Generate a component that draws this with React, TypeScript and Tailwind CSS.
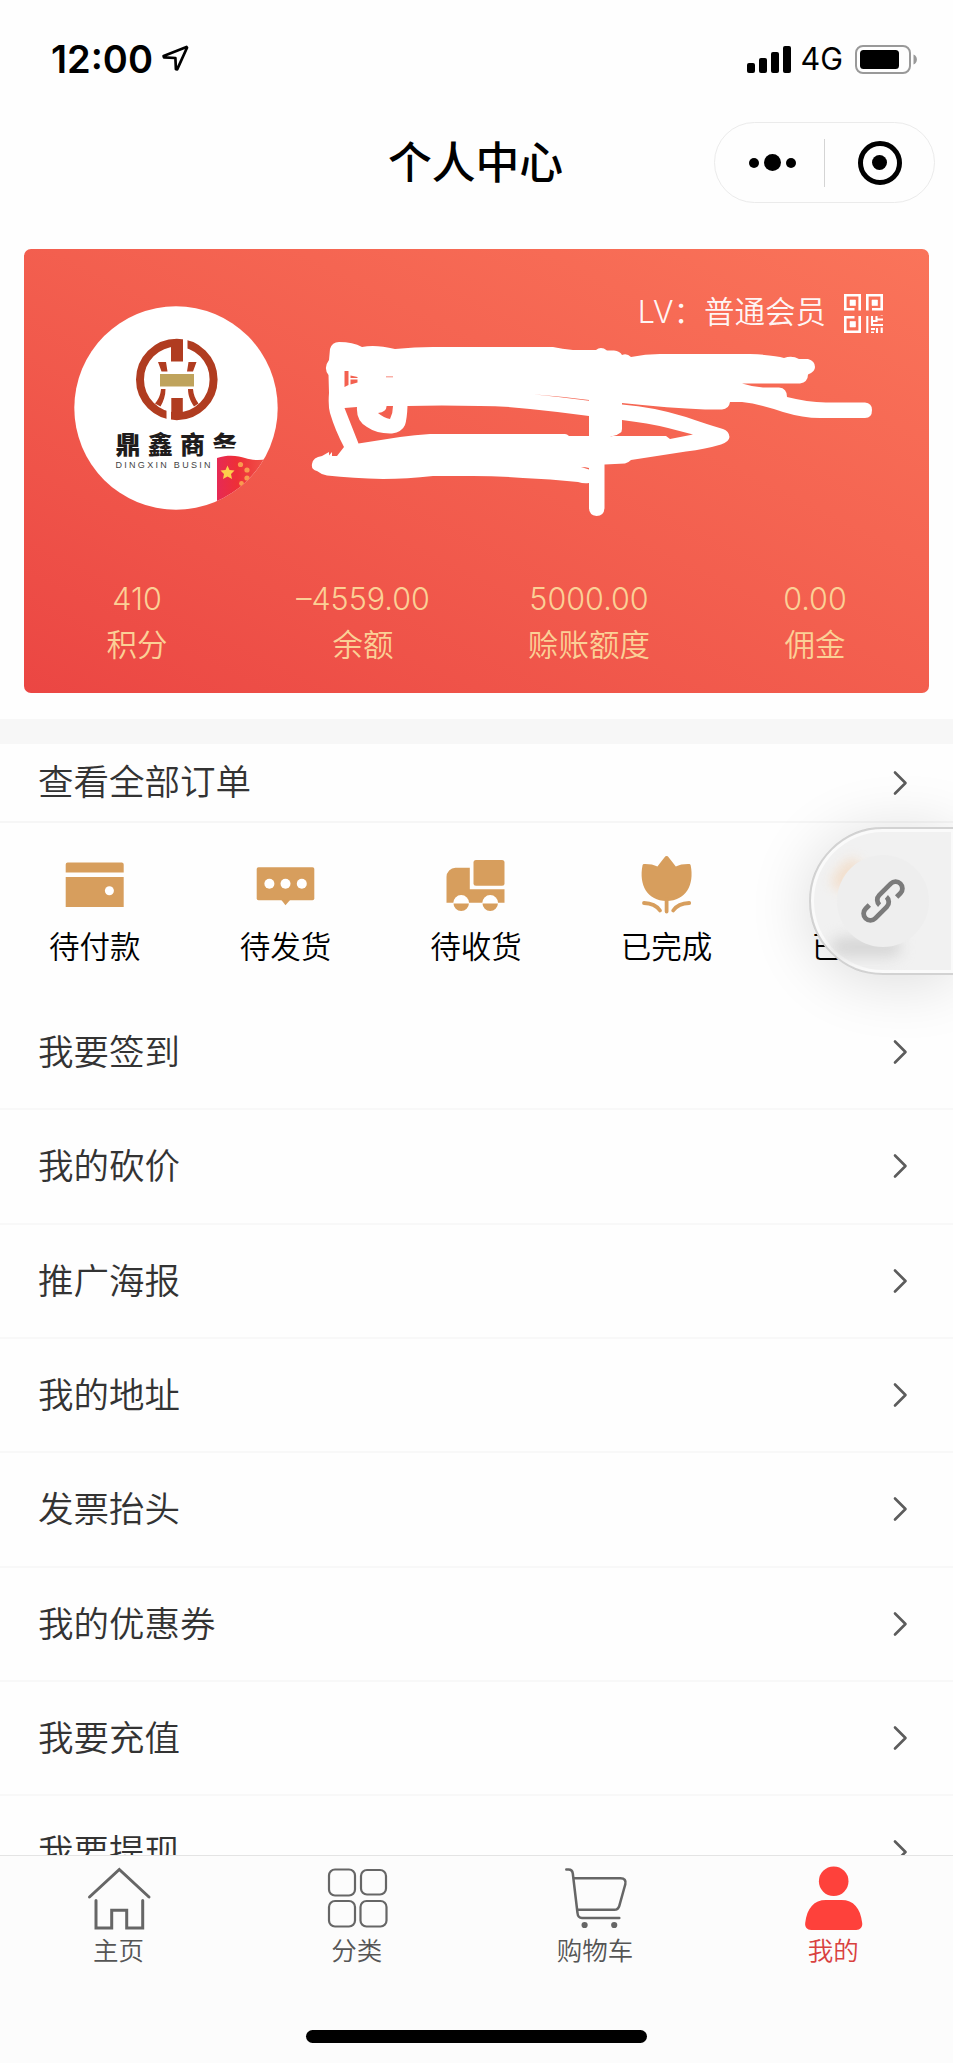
import React, { JSX } from 'react';
import { clsx } from 'clsx';

interface Stat {
  value: string;
  label: string;
}

interface OrderState {
  label: string;
  icon: () => JSX.Element | null;
}

interface Tab {
  label: string;
  icon: () => JSX.Element;
  active?: boolean;
}

const LocationArrow = () => (
  <svg width="27" height="27" viewBox="0 0 27 27" fill="none" className="ml-[9px] -mt-px">
    <path
      d="M1.600 11 24.500 2 25 2.800 15.200 24.400 13.900 24.200 13.400 13 2 12.300Z"
      stroke="#000"
      strokeWidth="2.7"
      strokeLinejoin="round"
    />
  </svg>
);

const Signal = () => (
  <svg width="44" height="27" viewBox="0 0 44 27">
    <rect x="0" y="17" width="8" height="10" rx="2" />
    <rect x="12" y="12" width="8" height="15" rx="2" />
    <rect x="24" y="6" width="8" height="21" rx="2" />
    <rect x="36" y="0" width="8" height="27" rx="2" />
  </svg>
);

const Battery = () => (
  <svg width="63" height="29" viewBox="0 0 63 29">
    <rect x="1" y="1" width="54" height="27" rx="7" fill="none" stroke="#999" strokeWidth="2" />
    <rect x="5" y="5" width="39" height="19" rx="3.5" />
    <path d="M58.5 9.5a5.4 5.4 0 0 1 0 10Z" fill="#999" />
  </svg>
);

const QrCode = () => (
  <svg width="39" height="39" viewBox="0 0 39 39" fill="none" stroke="#fff" strokeWidth="2.6">
    <path d="M10.500 15.200H1.300V1.300H15.700V16.500M23.300 16.500V1.300H37.700V15.200H28M10.500 23.300H1.300V37.700H15.700V22" />
    <path d="M6 6h5.500v5.500H6zM28 6h5.500v5.500H28zM6 27.500h5.500V33H6z" fill="#fff" strokeWidth="0.6" />
    <path
      d="M23.300 22v17M28 22v9h11M28 27h4.500v-5M32.500 25.500H39M37.700 22v-.5M37.700 33.500V39M33 34v5M27 35h4M27 38.500h3"
      strokeWidth="2.1"
    />
  </svg>
);

const Chevron = () => (
  <svg width="15" height="26" viewBox="0 0 15 26" fill="none">
    <path
      d="M2 2.500 12.500 13 2 23.500"
      stroke="#5c5c5c"
      strokeWidth="2.6"
      strokeLinecap="round"
      strokeLinejoin="round"
    />
  </svg>
);

const WalletIcon = () => (
  <svg width="64" height="64" viewBox="0 0 64 64" fill="#d79e5d">
    <path d="M4.700 9.500h54a2 2 0 0 1 2 2v8h-58v-8a2 2 0 0 1 2-2Z" />
    <path d="M2.700 24h58v30h-58z" />
    <circle cx="46.400" cy="37.700" r="4.500" fill="#fff" />
  </svg>
);

const MessageIcon = () => (
  <svg width="64" height="64" viewBox="0 0 64 64" fill="#d79e5d">
    <rect x="2.700" y="14.300" width="57.600" height="32.900" rx="1.800" />
    <path d="M27 46.500h9.500l-5 5.700z" />
    <g fill="#fff">
      <circle cx="15.400" cy="30.700" r="5" />
      <circle cx="31.500" cy="30.700" r="5" />
      <circle cx="47.800" cy="30.700" r="5" />
    </g>
  </svg>
);

const TruckIcon = () => (
  <svg width="64" height="64" viewBox="0 0 64 64" fill="#d79e5d">
    <path d="M11.500 14.700h14.300v21.600h34.700v13.400h-58V24a9 9.300 0 0 1 9-9.300Z" />
    <rect x="29.500" y="7" width="31" height="25.700" rx="2.500" />
    <circle cx="17.200" cy="50" r="7.900" fill="#fff" />
    <circle cx="46.200" cy="50" r="7.900" fill="#fff" />
    <path d="M9.500 50.500h15.400a7.700 7.500 0 0 1-15.400 0ZM38.500 50.500h15.400a7.700 7.500 0 0 1-15.400 0Z" />
  </svg>
);

const TulipIcon = () => (
  <svg width="64" height="64" viewBox="0 0 64 64" fill="#d79e5d">
    <path d="M31.600 3c.8 0 1.500.4 2 1.200l7.200 9.300c3.500-1.800 7.800-2.600 13.200-2.500 1 0 1.500.5 1.700 1.500C59.500 32 51 47.500 31.600 48 12.200 47.500 3.700 32 7.500 12.500c.2-1 .7-1.500 1.700-1.500 5.400-.1 9.700.7 13.200 2.500l7.200-9.300c.5-.8 1.200-1.200 2-1.200Z" />
    <path
      d="M31.600 46v12.500M9 50c7 .2 12.500 2.500 16 7.500M54.200 50c-7 .2-12.500 2.500-16 7.500"
      fill="none"
      stroke="#d79e5d"
      strokeWidth="3.800"
      strokeLinecap="round"
    />
  </svg>
);

const HomeIcon = () => (
  <svg width="66" height="66" viewBox="0 0 66 66" fill="none" stroke="#666" strokeWidth="3" strokeLinecap="round">
    <path d="M3.500 31 33.300 3.500 63 31" />
    <path d="M10 34.500V62h15.700V44.300h15V62h16V34.500" />
  </svg>
);

const CategoryIcon = () => (
  <svg width="66" height="66" viewBox="0 0 66 66" fill="none" stroke="#666" strokeWidth="2.200">
    <rect x="5" y="3.500" width="26" height="26" rx="6" />
    <rect x="37" y="4" width="25" height="24.500" rx="6" />
    <rect x="5" y="35" width="26" height="25.500" rx="6" />
    <rect x="36.500" y="35" width="26" height="25.500" rx="6" />
  </svg>
);

const CartIcon = () => (
  <svg width="66" height="66" viewBox="0 0 66 66" fill="none" stroke="#666" strokeWidth="2.500" strokeLinecap="round">
    <path d="M3.300 3.500h2.200c2.800 0 4 1.500 4.300 4l4.700 39.500c.3 3.500 1.800 5 4.500 5h37.300" />
    <path d="M11 12.300h46.500c4 0 5.800 2.200 4.800 6l-6 21.500c-.8 2.800-2 4-5 4H15" />
    <circle cx="21.600" cy="59" r="3.100" fill="#666" stroke="none" />
    <circle cx="51.200" cy="59" r="3.100" fill="#666" stroke="none" />
  </svg>
);

const UserIcon = () => (
  <svg width="66" height="66" viewBox="0 0 66 66" fill="#fe413b">
    <circle cx="32.700" cy="15.300" r="14.800" />
    <path d="M25 34h15.500c12 0 19 8 20.700 23 .5 4-2 7-6 7h-45c-4 0-6.500-3-6-7C6 42 13 34 25 34Z" />
  </svg>
);

const LinkIcon = () => (
  <svg width="50" height="50" viewBox="-25 -25 50 50" fill="none" stroke="#7b7b7b" strokeWidth="4.800">
    <g transform="rotate(-45)">
      <path d="M12.500 6.800H17.800a6.800 6.800 0 0 0 0-13.600H1.500a6.800 6.800 0 0 0-6.800 7.300" />
      <path d="M-12.500-6.800H-17.800a6.800 6.800 0 0 0 0 13.600H-1.500a6.800 6.800 0 0 0 6.800-7.300" />
    </g>
  </svg>
);

const stats: Stat[] = [
  { value: '410', label: '积分' },
  { value: '–4559.00', label: '余额' },
  { value: '5000.00', label: '赊账额度' },
  { value: '0.00', label: '佣金' },
];

const orderStates: OrderState[] = [
  { label: '待付款', icon: WalletIcon },
  { label: '待发货', icon: MessageIcon },
  { label: '待收货', icon: TruckIcon },
  { label: '已完成', icon: TulipIcon },
  { label: '已', icon: () => null },
];

const menu = [
  '我要签到',
  '我的砍价',
  '推广海报',
  '我的地址',
  '发票抬头',
  '我的优惠券',
  '我要充值',
  '我要提现',
];

const tabs: Tab[] = [
  { label: '主页', icon: HomeIcon },
  { label: '分类', icon: CategoryIcon },
  { label: '购物车', icon: CartIcon },
  { label: '我的', icon: UserIcon, active: true },
];

function Avatar() {
  return (
    <svg width="204" height="204" viewBox="74 306 204 204" className="mt-3 shrink-0">
      <defs>
        <clipPath id="avatar-clip">
          <circle cx="176" cy="408" r="101.700" />
        </clipPath>
        <linearGradient id="flag" x1="0" x2="1">
          <stop offset="0" stopColor="#e62a55" />
          <stop offset="0.400" stopColor="#ee2f37" />
          <stop offset="1" stopColor="#f0544a" />
        </linearGradient>
      </defs>
      <circle cx="176" cy="408" r="101.700" fill="#fff" />
      <g clipPath="url(#avatar-clip)">
        {/* coin emblem */}
        <circle cx="176.800" cy="379.500" r="36.800" fill="none" stroke="#b03c20" strokeWidth="8" />
        <path d="M183 336h4.500v17H183zM166.500 405h4.500v17h-4.500z" fill="#fff" />
        <path d="M171 341h12v20.500h-12zM171.300 398h11.500v21h-11.500z" fill="#b03c20" />
        <path d="M158 362h8l1.500 9.500h-6zM188.500 362h8l-3.500 9.500h-6z" fill="#b03c20" />
        <path
          d="M161 389h4.500c0 7-2 12-5 17.500l-5.500-3c4-5 5.500-9 6-14.500ZM188 389h5c.5 5.500 2 9.500 5.500 14.500l-4.500 3c-3.500-5.500-6-10.500-6-17.500Z"
          fill="#b03c20"
        />
        <path d="M160 374h34v12.500h-34z" fill="#bfa35c" />
        <text
          x="115.500"
          y="454"
          fontSize="25"
          letterSpacing="7.200"
          fontWeight="900"
          fill="#1f1c1c"
          fontFamily='"Noto Sans CJK SC", sans-serif'
        >
          鼎鑫商务
        </text>
        <path d="M210 448.500h34v10h-34z" fill="#fff" />
        <text
          x="115.500"
          y="467.500"
          fontSize="9"
          textLength="95"
          fill="#444"
          fontFamily='"Liberation Sans", sans-serif'
        >
          DINGXIN BUSIN
        </text>
        {/* flag */}
        <path d="M217 458c12-4 22-2 28 0s14 3 22 1v50h-50z" fill="url(#flag)" />
        <path
          d="m227.500 465.500 2 4.500 5 .5-3.500 3.500 1 5-4.500-2.500-4.500 2.500 1-5-3.500-3.500 5-.5z"
          fill="#fccf4b"
        />
        <g fill="#f99b4f">
          <circle cx="240.500" cy="464.500" r="2.600" />
          <circle cx="247" cy="470" r="2.600" />
          <circle cx="247" cy="478" r="2.600" />
          <circle cx="241.500" cy="483.500" r="2.400" />
        </g>
      </g>
    </svg>
  );
}

/* Hand-drawn strokes that hide the member's name */
function NameMask() {
  return (
    <svg
      className="pointer-events-none absolute inset-0"
      width="905"
      height="444"
      viewBox="24 249 905 444"
      fill="#fff"
    >
      <path
        fillRule="evenodd"
        d="M330 349Q332 342 339 342Q353 342 362 347Q375 344 395 349Q415 347 433 347H553Q562 349 573 350H596Q601 346 607 350.500H614Q620 351 622 355Q627 353 631 357Q645 354 660 354H750Q775 355 784 358Q792 355 799 359H808Q815 361 815 367Q815 372 808 374.500Q808 382 800 383.500L742 383.500Q753 387 763 387.500H779Q787 388 787 397Q807 402 826 402.500H865Q872 403 872 410Q872 418 865 418H820Q803 418 783 412Q760 404 742 402H730Q729 409 722 409.500H705Q670 408 622 403V404.500Q654 407 686 417Q706 424 723 429Q729 431 729.500 437Q729 442 721 444.500Q706 449 686 451.500L631 460Q628 463 625 463.500L604.500 464.500V508Q604 516 596.500 516Q589 515 589 508V483Q584 484 578 482Q550 479 523 478Q498 476 473 476H433Q407 479 383 479Q353 478 327 475.500Q322 475 317 471Q311 470 312 464Q313 457 322 456L329 452V455.500L332 452L332 456H337L344 447Q335 430 330 413Q328 406 329 393L328.500 375Q323 368 329 360Z
        M344.500 408L357 407Q356 421 367 427Q377 434 392 433.500Q402 432 405 425Q407 419 407.500 406Q440 405 480 406Q505 406 530 409Q560 412 589 416V436H569Q567 434 565 434H430Q415 435 400 437L358.500 443.500Z
        M378 413Q387 412 386.500 406H393Q393 413 390 419Q384 418 378 413Z
        M344.500 371L348.500 371V385L344.500 387Z
        M350.500 375.500L357.500 377V378H350.500Z
        M350.500 379.500H357.500V382.500L350.500 384.500Z
        M386 376.500H393V377.300H386Z
        M533 394.300Q561 396.500 589 400V400.800Q560 397 533 394.300Z
        M581 467Q586 467 589 468V469.500Z
        M622 420Q648 423 668 428L693 434.500L670 439L666 436H610Q615 437 620 433Q622 432 622 429Z"
      />
    </svg>
  );
}

function MemberCard() {
  return (
    <section className="relative mx-6 h-[444px] rounded-[7px] bg-linear-to-tr from-[#eb4643] to-[#fa745a] pt-[45px]">
      <div className="flex justify-between pr-[46px] pl-[50px]">
        <Avatar />
        <div className="flex h-[39px] items-center text-[30.500px] font-[350] whitespace-nowrap text-white/95">
          <span className="mr-[18px] -mt-[3px]">LV：普通会员</span>
          <QrCode />
        </div>
      </div>
      <div className="mt-[66px] grid grid-cols-4 pr-px text-center text-[30.500px] leading-[46px] font-[350] text-[#fbd096]">
        {stats.map((stat) => (
          <div key={stat.label}>
            <p>{stat.value}</p>
            <p>{stat.label}</p>
          </div>
        ))}
      </div>
      <NameMask />
    </section>
  );
}

function FloatingLink() {
  return (
    <div className="absolute top-[827px] -right-[3px] h-[148px] w-[147px]">
      <div className="relative flex size-full items-center overflow-hidden rounded-l-full border-2 border-[#d2d2d2] bg-[#f1f1f1] pl-[26px] shadow-[inset_0_0_0_3px_#fafafa]">
        {/* content showing faintly through the frosted glass */}
        <i className="absolute top-[28px] left-[26px] h-9 w-5 rotate-40 rounded-full bg-[#f3d3b5]/60 blur-[6px]" />
        <i className="absolute top-[108px] left-[20px] h-5 w-[70px] rounded-full bg-[#cfcfcf]/80 blur-[7px]" />
        <div className="relative flex size-[92px] items-center justify-center rounded-full bg-[#eeeeee]">
          <LinkIcon />
        </div>
      </div>
      <div className="absolute inset-0 rounded-l-full shadow-[0_6px_64px_rgba(0,0,0,0.14)]" />
    </div>
  );
}

export default function App() {
  return (
    <div className='relative flex h-[2063px] w-[953px] flex-col overflow-hidden bg-[#fefefe] font-[Inter,"Noto_Sans_CJK_SC",sans-serif] text-black'>
      {/* Status bar */}
      <div className="flex h-[118px] shrink-0 items-center justify-between pr-[35px] pl-[51px]">
        <div className="flex items-center">
          <span className="text-[38px] font-semibold">12:00</span>
          <LocationArrow />
        </div>
        <div className="flex items-center">
          <Signal />
          <span className="mr-3 ml-2.5 text-[30.500px]">4G</span>
          <Battery />
        </div>
      </div>

      {/* Title bar */}
      <header className="relative flex h-[91px] shrink-0 items-center justify-center pr-0.5">
        <h1 className="text-[43.800px] font-medium">个人中心</h1>
        <div className="absolute top-[4px] right-[18px] flex h-[81px] w-[221px] items-center rounded-full border border-[#ebebeb]">
          <div className="flex w-[109px] items-center justify-center gap-[5px] pl-1.5">
            <i className="size-2.5 rounded-full bg-black" />
            <i className="size-[17px] rounded-full bg-black" />
            <i className="size-2.5 rounded-full bg-black" />
          </div>
          <div className="h-12 w-px bg-[#d4d4d4]" />
          <div className="flex flex-1 justify-center">
            <div className="flex size-11 items-center justify-center rounded-full border-[5px] border-black">
              <i className="size-[15px] rounded-full bg-black" />
            </div>
          </div>
        </div>
      </header>

      <main className="min-h-0 flex-1 overflow-hidden pt-10">
        <MemberCard />

        <div className="mt-[26px] h-[25px] bg-[#f7f7f7]" />

        <div className="flex h-[79px] items-center justify-between border-b-2 border-[#f6f6f6] pr-[45px] pl-[38px] text-[#333]">
          <span className="mt-px text-[35.500px] font-[350]">查看全部订单</span>
          <Chevron />
        </div>

        <div className="grid h-[173px] grid-cols-5 pt-[30px]">
          {orderStates.map(({ label, icon: Icon }) => (
            <div key={label} className="flex flex-col items-center">
              <div className="size-16">
                <Icon />
              </div>
              <span
                className={clsx(
                  'mt-[7px] pr-px text-[30.500px] leading-[45px] font-[350]',
                  label === '已' && 'mr-[61px]',
                )}
              >
                {label}
              </span>
            </div>
          ))}
        </div>

        {menu.map((item) => (
          <div
            key={item}
            className="flex h-[114.330px] items-center justify-between border-b-2 border-[#f8f8f8] pr-[45px] pl-[38px] text-[#333]"
          >
            <span className="mt-px text-[35.500px] font-[350]">{item}</span>
            <Chevron />
          </div>
        ))}
      </main>

      {/* Tab bar */}
      <nav className="h-[208px] shrink-0 border-t border-[#e4e4e4] bg-[#fcfcfc]">
        <div className="grid grid-cols-4 pt-2.5">
          {tabs.map(({ label, icon: Icon, active }) => (
            <div
              key={label}
              className={clsx(
                'flex flex-col items-center text-[25.500px] leading-9 font-[350]',
                active ? 'text-[#d9413f]' : 'text-[#555]',
              )}
            >
              <Icon />
              <span className="mt-px pr-px">{label}</span>
            </div>
          ))}
        </div>
        <div className="mx-auto mt-[61px] h-[13px] w-[341px] rounded-full bg-black" />
      </nav>

      <FloatingLink />
    </div>
  );
}
